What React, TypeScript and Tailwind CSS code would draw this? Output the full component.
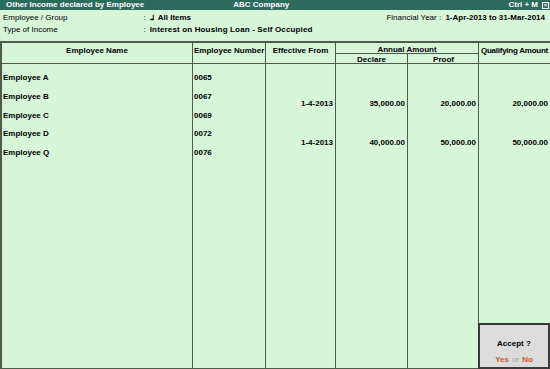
import React from "react";

const employees = [
  { name: "Employee A", no: "0065" },
  { name: "Employee B", no: "0067" },
  { name: "Employee C", no: "0069" },
  { name: "Employee D", no: "0072" },
  { name: "Employee Q", no: "0076" },
];

const amounts = [
  { from: "1-4-2013", declare: "35,000.00", proof: "20,000.00", qualifying: "20,000.00" },
  { from: "1-4-2013", declare: "40,000.00", proof: "50,000.00", qualifying: "50,000.00" },
];

const AmountColumn = ({ field }: { field: "from" | "declare" | "proof" | "qualifying" }) => (
  <div className="flex flex-col border-r border-[#4d5c4d] pt-[31px]">
    {amounts.map((a, i) => (
      <div key={i} className="h-[39px] pr-[2px] text-right leading-[18px]">
        {a[field]}
      </div>
    ))}
  </div>
);

export default function App() {
  return (
    <div
      className="relative flex h-[369px] w-[550px] flex-col overflow-hidden bg-[#d7f5d7] text-[8px] text-black"
      style={{ fontFamily: '"Liberation Sans", Arial, sans-serif' }}
    >
      {/* title bar */}
      <div className="flex h-[10px] items-center justify-between bg-[#2c6a5c] pl-[6px] pr-[1px] font-bold leading-none text-white">
        <span>Other Income declared by Employee</span>
        <span className="ml-[89px]">ABC Company</span>
        <span className="ml-auto flex items-center gap-[4px]">
          Ctrl + M
          <span className="flex h-[7px] w-[7px] items-center justify-center border border-white text-[6px] leading-none">
            ×
          </span>
        </span>
      </div>

      {/* info rows */}
      <div className="flex px-[3px] pt-[2px] leading-[12px]">
        <div className="flex flex-col">
          <span>Employee / Group</span>
          <span>Type of Income</span>
        </div>
        <div className="ml-[76px] flex flex-col">
          <span>:</span>
          <span>:</span>
        </div>
        <div className="ml-[4px] flex flex-col font-bold">
          <span>
            <span className="mr-[4px] text-[7px]">ᒧ</span>All Items
          </span>
          <span className="tracking-[0.15px]">Interest on Housing Loan - Self Occupied</span>
        </div>
        <div className="ml-auto flex flex-col items-end pr-[2px]">
          <span>
            Financial Year : <b className="ml-[2px]">1-Apr-2013 to 31-Mar-2014</b>
          </span>
        </div>
      </div>

      {/* table */}
      <div className="mt-[5px] flex flex-1 flex-col border-t-[2px] border-l-[2px] border-b border-[#4d5c4d] font-bold">
        <div className="grid h-[21px] grid-cols-[191px_73px_70px_143px_71px] border-b border-[#4d5c4d]">
          <div className="border-r border-[#4d5c4d] pt-[2px] text-center">Employee Name</div>
          <div className="border-r border-[#4d5c4d] pl-[1px] pt-[2px]">Employee Number</div>
          <div className="border-r border-[#4d5c4d] pt-[2px] text-center">Effective From</div>
          <div className="flex flex-col border-r border-[#4d5c4d]">
            <div className="h-[11px] border-b border-[#4d5c4d] pt-[1px] text-center">Annual Amount</div>
            <div className="grid flex-1 grid-cols-[72px_71px]">
              <div className="border-r border-[#4d5c4d] text-center">Declare</div>
              <div className="text-center">Proof</div>
            </div>
          </div>
          <div className="pt-[2px] text-center tracking-[-0.25px]">Qualifying Amount</div>
        </div>

        <div className="grid flex-1 grid-cols-[191px_73px_70px_72px_71px_71px]">
          <div className="flex flex-col border-r border-[#4d5c4d] pt-[5px] pl-[1px]">
            {employees.map((e) => (
              <div key={e.name} className="h-[18.75px] leading-[18px]">
                {e.name}
              </div>
            ))}
          </div>
          <div className="flex flex-col border-r border-[#4d5c4d] pt-[5px] pl-[1px]">
            {employees.map((e) => (
              <div key={e.no} className="h-[18.75px] leading-[18px]">
                {e.no}
              </div>
            ))}
          </div>
          <AmountColumn field="from" />
          <AmountColumn field="declare" />
          <AmountColumn field="proof" />
          <div className="flex flex-col pt-[31px]">
            {amounts.map((a, i) => (
              <div key={i} className="h-[39px] pr-[2px] text-right leading-[18px]">
                {a.qualifying}
              </div>
            ))}
          </div>
        </div>
      </div>

      {/* accept dialog */}
      <div className="absolute bottom-0 right-0 flex h-[46px] w-[72px] flex-col items-center border-[2px] border-[#3a3a3a] bg-[#dcdcdc] font-bold">
        <span className="mt-[13px]">Accept ?</span>
        <span className="mt-auto mb-[1px]">
          <span className="text-[#c75a2e]">Yes</span>
          <span className="mx-[3px] font-normal text-[#a0a0a0]">or</span>
          <span className="text-[#c75a2e]">No</span>
        </span>
      </div>
    </div>
  );
}
